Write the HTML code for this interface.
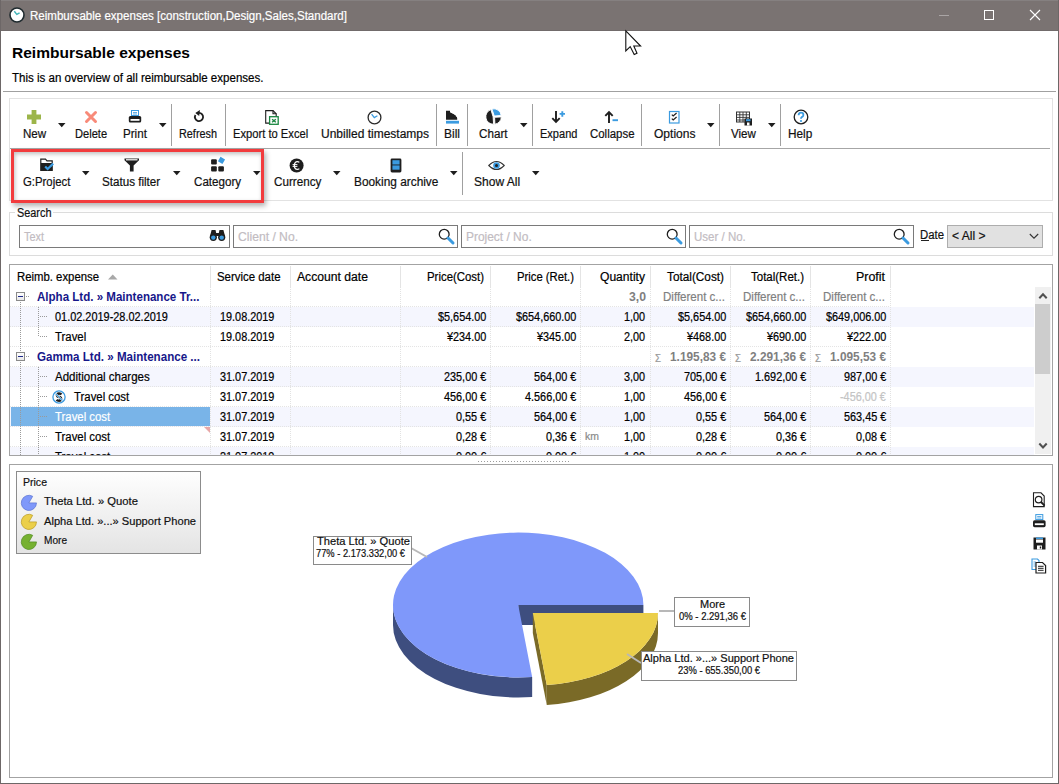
<!DOCTYPE html>
<html><head><meta charset="utf-8"><style>
html,body{margin:0;padding:0;width:1059px;height:784px;overflow:hidden;background:#fff;font-family:"Liberation Sans", sans-serif;}
div{box-sizing:border-box;}
svg{position:absolute;overflow:visible;}
</style></head><body>
<div style="position:absolute;left:0px;top:0px;width:1059px;height:31px;background:#7a7372"></div>
<div style="position:absolute;left:0px;top:0px;width:1059px;height:1px;background:#858080"></div>
<div style="position:absolute;left:1px;top:30px;width:1057px;height:1px;background:#716b6b"></div>
<div style="position:absolute;left:0px;top:0px;width:1px;height:784px;background:#6d6767"></div>
<div style="position:absolute;left:1058px;top:0px;width:1px;height:784px;background:#6d6767"></div>
<div style="position:absolute;left:0px;top:783px;width:1059px;height:1px;background:#6d6767"></div>
<svg style="left:9px;top:7px" width="16" height="16" viewBox="0 0 16 16"><circle cx="8" cy="8" r="7" fill="#fff" stroke="#1f2a2e" stroke-width="1.6"/><path d="M5.3 4.3 L7.8 7.4 L10.6 5.8" fill="none" stroke="#3fb3b8" stroke-width="1.4"/></svg>
<div style="position:absolute;left:939px;top:15px;width:10px;height:1px;background:#aaa5a5"></div>
<div style="position:absolute;left:984px;top:10px;width:10px;height:10px;border:1px solid #fff"></div>
<svg style="left:1029px;top:9px" width="12" height="12" viewBox="0 0 12 12"><path d="M1 1 L11 11 M11 1 L1 11" stroke="#fff" stroke-width="1.1"/></svg>
<div style="position:absolute;left:3px;top:91px;width:1053px;height:1px;background:#a0a0a0"></div>
<div style="position:absolute;left:9px;top:98px;width:1044px;height:103px;border:1px solid #e2e2e2"></div>
<div style="position:absolute;left:10px;top:148px;width:1040px;height:1px;background:#a6a6a6"></div>
<div style="position:absolute;left:171px;top:104px;width:1px;height:42px;background:#a0a0a0"></div>
<div style="position:absolute;left:225px;top:104px;width:1px;height:42px;background:#a0a0a0"></div>
<div style="position:absolute;left:436px;top:104px;width:1px;height:42px;background:#a0a0a0"></div>
<div style="position:absolute;left:467px;top:104px;width:1px;height:42px;background:#a0a0a0"></div>
<div style="position:absolute;left:532px;top:104px;width:1px;height:42px;background:#a0a0a0"></div>
<div style="position:absolute;left:641px;top:104px;width:1px;height:42px;background:#a0a0a0"></div>
<div style="position:absolute;left:719px;top:104px;width:1px;height:42px;background:#a0a0a0"></div>
<div style="position:absolute;left:780px;top:104px;width:1px;height:42px;background:#a0a0a0"></div>
<div style="position:absolute;left:462px;top:152px;width:1px;height:43px;background:#a0a0a0"></div>
<svg style="left:58px;top:123px" width="8" height="5" viewBox="0 0 8 5"><path d="M0 0 H7.5 L3.75 4.2 Z" fill="#1e1e1e"/></svg>
<svg style="left:159px;top:123px" width="8" height="5" viewBox="0 0 8 5"><path d="M0 0 H7.5 L3.75 4.2 Z" fill="#1e1e1e"/></svg>
<svg style="left:520px;top:123px" width="8" height="5" viewBox="0 0 8 5"><path d="M0 0 H7.5 L3.75 4.2 Z" fill="#1e1e1e"/></svg>
<svg style="left:707px;top:123px" width="8" height="5" viewBox="0 0 8 5"><path d="M0 0 H7.5 L3.75 4.2 Z" fill="#1e1e1e"/></svg>
<svg style="left:768px;top:123px" width="8" height="5" viewBox="0 0 8 5"><path d="M0 0 H7.5 L3.75 4.2 Z" fill="#1e1e1e"/></svg>
<svg style="left:82px;top:171px" width="8" height="5" viewBox="0 0 8 5"><path d="M0 0 H7.5 L3.75 4.2 Z" fill="#1e1e1e"/></svg>
<svg style="left:173px;top:171px" width="8" height="5" viewBox="0 0 8 5"><path d="M0 0 H7.5 L3.75 4.2 Z" fill="#1e1e1e"/></svg>
<svg style="left:253px;top:171px" width="8" height="5" viewBox="0 0 8 5"><path d="M0 0 H7.5 L3.75 4.2 Z" fill="#1e1e1e"/></svg>
<svg style="left:333px;top:171px" width="8" height="5" viewBox="0 0 8 5"><path d="M0 0 H7.5 L3.75 4.2 Z" fill="#1e1e1e"/></svg>
<svg style="left:450px;top:171px" width="8" height="5" viewBox="0 0 8 5"><path d="M0 0 H7.5 L3.75 4.2 Z" fill="#1e1e1e"/></svg>
<svg style="left:532px;top:171px" width="8" height="5" viewBox="0 0 8 5"><path d="M0 0 H7.5 L3.75 4.2 Z" fill="#1e1e1e"/></svg>
<svg style="left:27px;top:110px" width="14" height="14" viewBox="0 0 14 14"><path d="M4.6 0 H9.4 V4.6 H14 V9.4 H9.4 V14 H4.6 V9.4 H0 V4.6 H4.6 Z" fill="#9cb54a"/></svg>
<svg style="left:85px;top:111px" width="12" height="12" viewBox="0 0 12 12"><path d="M1.5 1.5 L10.5 10.5 M10.5 1.5 L1.5 10.5" stroke="#f88a79" stroke-width="3" stroke-linecap="round"/></svg>
<svg style="left:128px;top:110px" width="14" height="14" viewBox="0 0 14 14"><rect x="3.5" y="0.5" width="7" height="5" fill="#fff" stroke="#3b9be0" stroke-width="1"/><path d="M5 2.5 H9 M5 4 H9" stroke="#3b9be0" stroke-width="0.8"/><rect x="0.8" y="6" width="12.4" height="6.5" rx="1.5" fill="#1e1e1e"/><rect x="2.5" y="9" width="9" height="1.8" fill="#fff"/></svg>
<svg style="left:193px;top:109px" width="13" height="14" viewBox="0 0 13 14"><path d="M6 3.9 A4.1 4.1 0 1 1 2.45 5.95" fill="none" stroke="#1e1e1e" stroke-width="1.8"/><path d="M2.3 4 L6.9 1 L6.2 6.9 Z" fill="#1e1e1e"/></svg>
<svg style="left:264px;top:109px" width="16" height="17" viewBox="0 0 16 17"><path d="M1.7 1.6 H9 L12.2 4.8 V14.1 H1.7 Z" fill="#fff" stroke="#1e1e1e" stroke-width="1.1"/><path d="M9 1.6 V4.8 H12.2" fill="none" stroke="#1e1e1e" stroke-width="1.1"/><rect x="5.6" y="7.7" width="8.6" height="7.6" fill="#fff" stroke="#1a8641" stroke-width="1.3"/><path d="M8.1 10.2 L11.8 13.3 M11.8 10.2 L8.1 13.3" stroke="#1a8641" stroke-width="1.4"/></svg>
<svg style="left:367px;top:110px" width="15" height="15" viewBox="0 0 15 15"><circle cx="7.5" cy="7.5" r="6.4" fill="#fff" stroke="#2a2a2a" stroke-width="1.3"/><path d="M4.6 4.2 L7.3 7.6 L10.4 5.8" fill="none" stroke="#3b9be0" stroke-width="1.3"/></svg>
<svg style="left:445px;top:110px" width="15" height="15" viewBox="0 0 15 15"><path d="M1 0.8 H5 V2.3 Q6 2.8 7 3.2 L9 4.2 L10.6 5.4 L11.8 6.8 L12.2 8.6 V9.8 H1 Z" fill="#1e1e1e"/><circle cx="6.3" cy="2.4" r="0.5" fill="#fff"/><circle cx="8.2" cy="3.4" r="0.5" fill="#fff"/><circle cx="10" cy="4.6" r="0.5" fill="#fff"/><circle cx="11.4" cy="6.2" r="0.5" fill="#fff"/><rect x="1" y="10.8" width="13" height="2.8" fill="#3b9be0"/></svg>
<svg style="left:485px;top:108px" width="18" height="18" viewBox="0 0 18 18"><path d="M8.1 8.8 L5.9 1.6 A7.5 7.5 0 0 0 8.6 16.2 Z" fill="#1e1e1e" stroke="#fff" stroke-width="0.9"/><path d="M9.3 8 L6.9 1 A7.5 7.5 0 0 1 16.2 7.4 Z" fill="#3b9be0" stroke="#fff" stroke-width="0.9"/><path d="M9.6 9.3 L16.3 8.9 A7.5 7.5 0 0 1 9.9 16.2 Z" fill="#1e1e1e" stroke="#fff" stroke-width="0.9"/></svg>
<svg style="left:551px;top:110px" width="15" height="14" viewBox="0 0 15 14"><path d="M5 1 V12 M1.3 8.2 L5 12 L8.7 8.2" fill="none" stroke="#1e1e1e" stroke-width="1.9"/><path d="M11.3 1.2 V6.7 M8.6 3.9 H14" stroke="#3b9be0" stroke-width="1.9"/></svg>
<svg style="left:604px;top:110px" width="15" height="14" viewBox="0 0 15 14"><path d="M5 13 V2 M1.3 5.8 L5 2 L8.7 5.8" fill="none" stroke="#1e1e1e" stroke-width="1.9"/><path d="M8.5 10.2 H14" stroke="#3b9be0" stroke-width="1.9"/></svg>
<svg style="left:668px;top:110px" width="12" height="14" viewBox="0 0 12 14"><rect x="1.5" y="1.5" width="9.5" height="11.5" fill="#fff" stroke="#3b9be0" stroke-width="1.2"/><path d="M3.8 4.6 L5.2 6 L8.6 3 M3.8 8.6 L5.2 10 L8.6 7" fill="none" stroke="#1e1e1e" stroke-width="1.2"/></svg>
<svg style="left:736px;top:111px" width="17" height="15" viewBox="0 0 17 15"><rect x="0.5" y="1" width="13" height="10" fill="#fff" stroke="#333" stroke-width="1"/><path d="M0.5 3.8 H13.5 M0.5 6.4 H13.5 M0.5 9 H13.5 M3.8 1 V11 M7 1 V11 M10.3 1 V11" stroke="#333" stroke-width="0.9"/><rect x="8.5" y="7.5" width="7.5" height="7" fill="#1e1e1e"/><rect x="10" y="8.2" width="4.5" height="2" fill="#3b9be0"/><rect x="11" y="11.5" width="2.5" height="3" fill="#fff"/></svg>
<svg style="left:793px;top:109px" width="16" height="16" viewBox="0 0 16 16"><circle cx="8" cy="8" r="6.8" fill="#fff" stroke="#1e1e1e" stroke-width="1.3"/><path d="M5.6 6.2 Q5.6 3.6 8 3.6 Q10.4 3.6 10.4 5.9 Q10.4 7.4 8.8 8.1 Q8 8.5 8 9.8" fill="none" stroke="#3b9be0" stroke-width="1.8"/><circle cx="8" cy="12" r="1.1" fill="#3b9be0"/></svg>
<svg style="left:40px;top:158px" width="16" height="15" viewBox="0 0 16 15"><path d="M0.8 1.2 H5.5 L7 2.8 H12.2 V12.5 H0.8 Z" fill="#fff" stroke="#1e1e1e" stroke-width="1.2"/><rect x="0.8" y="5" width="11.4" height="7.5" fill="#1e1e1e"/><path d="M5.2 8.4 L7.6 11 L13.2 5.6" fill="none" stroke="#3b9be0" stroke-width="2.2"/></svg>
<svg style="left:124px;top:158px" width="16" height="14" viewBox="0 0 16 14"><path d="M0.5 0.5 H15 V2.2 L9.6 7.5 V13.5 H5.9 V7.5 L0.5 2.2 Z" fill="#1e1e1e"/><rect x="2" y="1.2" width="11.5" height="1.2" fill="#fff"/></svg>
<svg style="left:210px;top:157px" width="16" height="16" viewBox="0 0 16 16"><rect x="1.1" y="2.2" width="5.7" height="5.4" rx="1" fill="#1e1e1e"/><rect x="1.1" y="9.2" width="5.7" height="5.4" rx="1" fill="#1e1e1e"/><rect x="8.3" y="9.2" width="5.6" height="5.4" rx="1" fill="#1e1e1e"/><rect x="8.9" y="0.8" width="5.2" height="5.2" transform="rotate(30 11.5 3.4)" fill="#3b9be0"/></svg>
<svg style="left:289px;top:158px" width="16" height="15" viewBox="0 0 16 15"><circle cx="7.6" cy="7.5" r="7" fill="#1e1e1e"/><path d="M10.3 4.4 Q9.5 3.6 8.3 3.6 Q5.6 3.6 5.3 7.5 Q5.6 11.4 8.3 11.4 Q9.5 11.4 10.3 10.6" fill="none" stroke="#fff" stroke-width="1.3"/><path d="M3.6 6.6 H8.4 M3.6 8.4 H8.4" stroke="#fff" stroke-width="1"/></svg>
<svg style="left:390px;top:158px" width="12" height="15" viewBox="0 0 12 15"><rect x="0.6" y="0.6" width="10.8" height="13.8" rx="1.4" fill="#1e1e1e"/><rect x="2.4" y="2.2" width="7.2" height="4.3" fill="#3b9be0"/><rect x="2.4" y="7.4" width="7.2" height="4.3" fill="#3b9be0"/></svg>
<svg style="left:488px;top:160px" width="17" height="11" viewBox="0 0 17 11"><path d="M0.8 5.5 Q8.5 -2.5 16.2 5.5 Q8.5 13.5 0.8 5.5 Z" fill="#fff" stroke="#333" stroke-width="1.1"/><circle cx="8.5" cy="5.5" r="3.3" fill="#3b9be0"/><circle cx="8.5" cy="5.5" r="1.5" fill="#1e1e1e"/></svg>
<div style="position:absolute;left:9px;top:212px;width:1044px;height:44px;border:1px solid #dcdcdc"></div>
<div style="position:absolute;left:15px;top:205px;width:38px;height:12px;background:#fff"></div>
<div style="position:absolute;left:19px;top:225px;width:211px;height:23px;border:1px solid #7a7a7a"></div>
<div style="position:absolute;left:233px;top:225px;width:225px;height:23px;border:1px solid #7a7a7a"></div>
<div style="position:absolute;left:461px;top:225px;width:225px;height:23px;border:1px solid #7a7a7a"></div>
<div style="position:absolute;left:689px;top:225px;width:225px;height:23px;border:1px solid #7a7a7a"></div>
<svg style="left:209px;top:229px" width="17" height="13" viewBox="0 0 17 13"><path d="M2.6 1 H6.5 L7.2 4 H9.8 L10.5 1 H14.4 L16 7 H1 Z" fill="#1e1e1e"/><circle cx="4.3" cy="8.3" r="3.6" fill="#1e1e1e"/><circle cx="12.7" cy="8.3" r="3.6" fill="#1e1e1e"/><circle cx="4.3" cy="8.6" r="2.2" fill="#3b9be0"/><circle cx="12.7" cy="8.6" r="2.2" fill="#3b9be0"/></svg>
<svg style="left:438px;top:228px" width="17" height="17" viewBox="0 0 17 17"><circle cx="6.2" cy="6.2" r="4.9" fill="#fff" stroke="#1e1e1e" stroke-width="1.3"/><path d="M10 10 L15 15" stroke="#3b9be0" stroke-width="3" stroke-linecap="round"/></svg>
<svg style="left:666px;top:228px" width="17" height="17" viewBox="0 0 17 17"><circle cx="6.2" cy="6.2" r="4.9" fill="#fff" stroke="#1e1e1e" stroke-width="1.3"/><path d="M10 10 L15 15" stroke="#3b9be0" stroke-width="3" stroke-linecap="round"/></svg>
<svg style="left:893px;top:228px" width="17" height="17" viewBox="0 0 17 17"><circle cx="6.2" cy="6.2" r="4.9" fill="#fff" stroke="#1e1e1e" stroke-width="1.3"/><path d="M10 10 L15 15" stroke="#3b9be0" stroke-width="3" stroke-linecap="round"/></svg>
<div style="position:absolute;left:920.5px;top:240px;width:8px;height:1px;background:#222"></div>
<div style="position:absolute;left:947px;top:225px;width:96px;height:23px;background:#e1e1e1;border:1px solid #adadad"></div>
<svg style="left:1029px;top:233px" width="10" height="7" viewBox="0 0 10 7"><path d="M0.8 1 L5 5.2 L9.2 1" fill="none" stroke="#333" stroke-width="1.1"/></svg>
<div style="position:absolute;left:10px;top:307px;width:1024px;height:20px;background:#f5f6fe"></div>
<div style="position:absolute;left:10px;top:367px;width:1024px;height:20px;background:#f5f6fe"></div>
<div style="position:absolute;left:10px;top:407px;width:1024px;height:20px;background:#f5f6fe"></div>
<div style="position:absolute;left:10px;top:447px;width:1024px;height:8px;background:#f5f6fe"></div>
<div style="position:absolute;left:11px;top:407px;width:199px;height:19px;background:#79b4e8"></div>
<div style="position:absolute;left:210px;top:266px;width:1px;height:21px;background:#e4e4e4"></div>
<div style="position:absolute;left:290px;top:266px;width:1px;height:21px;background:#e4e4e4"></div>
<div style="position:absolute;left:400px;top:266px;width:1px;height:21px;background:#e4e4e4"></div>
<div style="position:absolute;left:490px;top:266px;width:1px;height:21px;background:#e4e4e4"></div>
<div style="position:absolute;left:580px;top:266px;width:1px;height:21px;background:#e4e4e4"></div>
<div style="position:absolute;left:650px;top:266px;width:1px;height:21px;background:#e4e4e4"></div>
<div style="position:absolute;left:730px;top:266px;width:1px;height:21px;background:#e4e4e4"></div>
<div style="position:absolute;left:810px;top:266px;width:1px;height:21px;background:#e4e4e4"></div>
<div style="position:absolute;left:890px;top:266px;width:1px;height:21px;background:#e4e4e4"></div>
<div style="position:absolute;left:210px;top:287px;width:1px;height:168px;background-image:linear-gradient(#e2e2e2 50%,transparent 50%);background-size:1px 2px"></div>
<div style="position:absolute;left:290px;top:287px;width:1px;height:168px;background-image:linear-gradient(#e2e2e2 50%,transparent 50%);background-size:1px 2px"></div>
<div style="position:absolute;left:400px;top:287px;width:1px;height:168px;background-image:linear-gradient(#e2e2e2 50%,transparent 50%);background-size:1px 2px"></div>
<div style="position:absolute;left:490px;top:287px;width:1px;height:168px;background-image:linear-gradient(#e2e2e2 50%,transparent 50%);background-size:1px 2px"></div>
<div style="position:absolute;left:580px;top:287px;width:1px;height:168px;background-image:linear-gradient(#e2e2e2 50%,transparent 50%);background-size:1px 2px"></div>
<div style="position:absolute;left:650px;top:287px;width:1px;height:168px;background-image:linear-gradient(#e2e2e2 50%,transparent 50%);background-size:1px 2px"></div>
<div style="position:absolute;left:730px;top:287px;width:1px;height:168px;background-image:linear-gradient(#e2e2e2 50%,transparent 50%);background-size:1px 2px"></div>
<div style="position:absolute;left:810px;top:287px;width:1px;height:168px;background-image:linear-gradient(#e2e2e2 50%,transparent 50%);background-size:1px 2px"></div>
<div style="position:absolute;left:890px;top:287px;width:1px;height:168px;background-image:linear-gradient(#e2e2e2 50%,transparent 50%);background-size:1px 2px"></div>
<div style="position:absolute;left:10px;top:306px;width:880px;height:1px;background-image:linear-gradient(90deg,#e4e4e4 50%,transparent 50%);background-size:2px 1px"></div>
<div style="position:absolute;left:10px;top:326px;width:880px;height:1px;background-image:linear-gradient(90deg,#e4e4e4 50%,transparent 50%);background-size:2px 1px"></div>
<div style="position:absolute;left:10px;top:346px;width:880px;height:1px;background-image:linear-gradient(90deg,#e4e4e4 50%,transparent 50%);background-size:2px 1px"></div>
<div style="position:absolute;left:10px;top:366px;width:880px;height:1px;background-image:linear-gradient(90deg,#e4e4e4 50%,transparent 50%);background-size:2px 1px"></div>
<div style="position:absolute;left:10px;top:386px;width:880px;height:1px;background-image:linear-gradient(90deg,#e4e4e4 50%,transparent 50%);background-size:2px 1px"></div>
<div style="position:absolute;left:10px;top:406px;width:880px;height:1px;background-image:linear-gradient(90deg,#e4e4e4 50%,transparent 50%);background-size:2px 1px"></div>
<div style="position:absolute;left:10px;top:426px;width:880px;height:1px;background-image:linear-gradient(90deg,#e4e4e4 50%,transparent 50%);background-size:2px 1px"></div>
<div style="position:absolute;left:10px;top:446px;width:880px;height:1px;background-image:linear-gradient(90deg,#e4e4e4 50%,transparent 50%);background-size:2px 1px"></div>
<svg style="left:108px;top:274px" width="10" height="6" viewBox="0 0 10 6"><path d="M0 5.6 L4.75 0.6 L9.5 5.6 Z" fill="#a8a8a8"/></svg>
<div style="position:absolute;left:20px;top:302px;width:1px;height:153px;background-image:linear-gradient(#9a9a9a 50%,transparent 50%);background-size:1px 2px"></div>
<div style="position:absolute;left:38px;top:307px;width:1px;height:30px;background-image:linear-gradient(#9a9a9a 50%,transparent 50%);background-size:1px 2px"></div>
<div style="position:absolute;left:38px;top:367px;width:1px;height:88px;background-image:linear-gradient(#9a9a9a 50%,transparent 50%);background-size:1px 2px"></div>
<div style="position:absolute;left:16px;top:292px;width:9px;height:9px;border:1px solid #8a8a8a;background:linear-gradient(#fff,#e8e8e8)"></div>
<div style="position:absolute;left:18px;top:296px;width:5px;height:1px;background:#1f2a8a"></div>
<div style="position:absolute;left:26px;top:296px;width:4px;height:1px;background-image:linear-gradient(90deg,#9a9a9a 50%,transparent 50%);background-size:2px 1px"></div>
<div style="position:absolute;left:16px;top:352px;width:9px;height:9px;border:1px solid #8a8a8a;background:linear-gradient(#fff,#e8e8e8)"></div>
<div style="position:absolute;left:18px;top:356px;width:5px;height:1px;background:#1f2a8a"></div>
<div style="position:absolute;left:26px;top:356px;width:4px;height:1px;background-image:linear-gradient(90deg,#9a9a9a 50%,transparent 50%);background-size:2px 1px"></div>
<div style="position:absolute;left:40px;top:316px;width:8px;height:1px;background-image:linear-gradient(90deg,#9a9a9a 50%,transparent 50%);background-size:2px 1px"></div>
<div style="position:absolute;left:40px;top:336px;width:8px;height:1px;background-image:linear-gradient(90deg,#9a9a9a 50%,transparent 50%);background-size:2px 1px"></div>
<div style="position:absolute;left:40px;top:376px;width:8px;height:1px;background-image:linear-gradient(90deg,#9a9a9a 50%,transparent 50%);background-size:2px 1px"></div>
<div style="position:absolute;left:40px;top:396px;width:8px;height:1px;background-image:linear-gradient(90deg,#9a9a9a 50%,transparent 50%);background-size:2px 1px"></div>
<div style="position:absolute;left:40px;top:416px;width:8px;height:1px;background-image:linear-gradient(90deg,#9a9a9a 50%,transparent 50%);background-size:2px 1px"></div>
<div style="position:absolute;left:40px;top:436px;width:8px;height:1px;background-image:linear-gradient(90deg,#9a9a9a 50%,transparent 50%);background-size:2px 1px"></div>
<div style="position:absolute;left:40px;top:456px;width:8px;height:1px;background-image:linear-gradient(90deg,#9a9a9a 50%,transparent 50%);background-size:2px 1px"></div>
<svg style="left:52px;top:390px" width="15" height="15" viewBox="0 0 15 15"><circle cx="7" cy="7" r="6.1" fill="#fff" stroke="#3a9ae0" stroke-width="1.3"/><path d="M9.4 4.4 Q8.6 3.3 7 3.4 Q4.8 3.6 5 5.5 Q5.3 6.8 7 7 Q9.1 7.3 9.1 8.9 Q9 10.7 7 10.7 Q5.4 10.7 4.6 9.7" fill="none" stroke="#1e1e1e" stroke-width="2.5"/><path d="M3.6 3.6 L10.4 10.4" stroke="#fff" stroke-width="1.6"/><path d="M3.6 3.6 L10.4 10.4" stroke="#3a9ae0" stroke-width="1.1"/></svg>
<svg style="left:204px;top:427px" width="6" height="6" viewBox="0 0 6 6"><path d="M0 0 H6 V6 Z" fill="#e8a7a7"/></svg>
<div style="position:absolute;left:1035px;top:287px;width:16px;height:167px;background:#f0f0f0"></div>
<div style="position:absolute;left:1035px;top:304px;width:15px;height:70px;background:#cdcdcd"></div>
<svg style="left:1038px;top:292px" width="10" height="8" viewBox="0 0 10 8"><path d="M1.3 6.3 L5 2.3 L8.7 6.3" fill="none" stroke="#505050" stroke-width="2"/></svg>
<svg style="left:1038px;top:442px" width="10" height="8" viewBox="0 0 10 8"><path d="M1.3 1.5 L5 5.5 L8.7 1.5" fill="none" stroke="#505050" stroke-width="2"/></svg>
<div style="position:absolute;left:9px;top:464px;width:1044px;height:314px;border:1px solid #a3a3a3"></div>
<div style="position:absolute;left:16px;top:471px;width:185px;height:83px;border:1px solid #8c8c8c;background:linear-gradient(#fefefe,#e4e4e4)"></div>
<svg style="left:20px;top:494.0px" width="18" height="18" viewBox="0 0 18 18"><path d="M8.9 8.9 L12.7 2.32 A7.6 7.6 0 1 0 16.5 8.9 Z" fill="#7f98fa" stroke="#5a72d0" stroke-width="0.7"/></svg>
<svg style="left:20px;top:513.3px" width="18" height="18" viewBox="0 0 18 18"><path d="M8.9 8.9 L12.7 2.32 A7.6 7.6 0 1 0 16.5 8.9 Z" fill="#ebcf4a" stroke="#b89a20" stroke-width="0.7"/></svg>
<svg style="left:20px;top:532.6px" width="18" height="18" viewBox="0 0 18 18"><path d="M8.9 8.9 L12.7 2.32 A7.6 7.6 0 1 0 16.5 8.9 Z" fill="#76b130" stroke="#4f8a1f" stroke-width="0.7"/></svg>
<svg style="left:0;top:0" width="1059" height="784" viewBox="0 0 1059 784"><path d="M532.16 676.95 A125.2 72.4 0 0 1 393.00 605.00 L393.00 625.00 A125.2 72.4 0 0 0 532.16 696.95 Z" fill="#3e4e7f"/><path d="M518.2 605 L643.40 605.00 L643.40 625.00 L518.2 625 Z" fill="#3e4e7f"/><path d="M518.2 605 L532.16 676.95 A125.2 72.4 0 1 1 643.40 605.00 Z" fill="#7f98fa"/><path d="M658.00 613.00 A125.2 72.4 0 0 1 546.76 684.95 L546.76 704.95 A125.2 72.4 0 0 0 658.00 633.00 Z" fill="#7a6a27"/><path d="M532.8000000000001 613 L546.76 684.95 L546.76 704.95 L532.8000000000001 633 Z" fill="#7a6a27"/><path d="M532.8000000000001 613 L658.00 613.00 A125.2 72.4 0 0 1 546.76 684.95 Z" fill="#ebcf4a"/><path d="M411 548 L427 557" stroke="#b8b8b8" stroke-width="2"/><path d="M659 611 H674" stroke="#b8b8b8" stroke-width="2"/><path d="M627 654 L641 663" stroke="#b8b8b8" stroke-width="2"/></svg>
<div style="position:absolute;left:313px;top:536px;width:99px;height:29px;border:1px solid #8a8a8a;background:#fff"></div>
<div style="position:absolute;left:674px;top:597px;width:76px;height:30px;border:1px solid #8a8a8a;background:#fff"></div>
<div style="position:absolute;left:641px;top:651px;width:156px;height:30px;border:1px solid #8a8a8a;background:#fff"></div>
<svg style="left:1032px;top:492px" width="15" height="16" viewBox="0 0 15 16"><path d="M1.5 0.8 H9 L12.2 4 V14.6 H1.5 Z" fill="#fff" stroke="#1e1e1e" stroke-width="1.1"/><circle cx="6.6" cy="7.6" r="3.3" fill="#fff" stroke="#1e1e1e" stroke-width="1.2"/><path d="M9 10 L12.6 13.6" stroke="#1e1e1e" stroke-width="1.8"/></svg>
<svg style="left:1032px;top:514px" width="15" height="15" viewBox="0 0 15 15"><rect x="3.8" y="0.6" width="7" height="5" fill="#fff" stroke="#3b9be0" stroke-width="1"/><path d="M5.2 2.5 H9.4 M5.2 4 H9.4" stroke="#3b9be0" stroke-width="0.8"/><rect x="1" y="6.2" width="12.6" height="7" rx="1.6" fill="#1e1e1e"/><rect x="2.8" y="9.3" width="9" height="1.8" fill="#fff"/></svg>
<svg style="left:1033px;top:537px" width="13" height="13" viewBox="0 0 13 13"><path d="M0.5 0.5 H12.5 V12.5 H0.5 Z" fill="#1e1e1e"/><rect x="3" y="0.5" width="7" height="1.5" fill="#3b9be0"/><rect x="3" y="2.5" width="7" height="3.2" fill="#fff"/><rect x="4" y="8.5" width="5" height="4" fill="#fff"/><rect x="6.8" y="9.5" width="1.4" height="2" fill="#1e1e1e"/></svg>
<svg style="left:1031px;top:558px" width="16" height="16" viewBox="0 0 16 16"><path d="M1 1 H6.5 L8 2.5 V11.5 H1 Z" fill="#fff" stroke="#3b9be0" stroke-width="1.1"/><path d="M2.5 4 H5 M2.5 6 H5 M2.5 8 H5" stroke="#3b9be0" stroke-width="0.8"/><path d="M5 4.5 H11.5 L14.6 7.6 V15 H5 Z" fill="#fff" stroke="#1e1e1e" stroke-width="1.2"/><path d="M7 8.3 H12.6 M7 10.3 H12.6 M7 12.3 H12.6" stroke="#1e1e1e" stroke-width="1"/></svg>
<div style="position:absolute;left:30.00px;top:10.14px;font-size:12px;line-height:12px;font-weight:400;color:#fff;white-space:pre;-webkit-text-stroke:0.2px currentColor;transform-origin:0 0;transform:scaleX(0.9620);">Reimbursable expenses [construction,Design,Sales,Standard]</div>
<div style="position:absolute;left:12.00px;top:45.30px;font-size:15px;line-height:15px;font-weight:700;color:#000;white-space:pre;transform-origin:0 0;transform:scaleX(1.0364);">Reimbursable expenses</div>
<div style="position:absolute;left:12.00px;top:71.84px;font-size:12px;line-height:12px;font-weight:400;color:#000;white-space:pre;-webkit-text-stroke:0.2px currentColor;transform-origin:0 0;transform:scaleX(0.9619);">This is an overview of all reimbursable expenses.</div>
<div style="position:absolute;left:22.70px;top:127.64px;font-size:12px;line-height:12px;font-weight:400;color:#111;white-space:pre;-webkit-text-stroke:0.2px currentColor;transform-origin:0 0;transform:scaleX(0.9660);">New</div>
<div style="position:absolute;left:74.70px;top:127.64px;font-size:12px;line-height:12px;font-weight:400;color:#111;white-space:pre;-webkit-text-stroke:0.2px currentColor;transform-origin:0 0;transform:scaleX(0.9254);">Delete</div>
<div style="position:absolute;left:122.90px;top:127.64px;font-size:12px;line-height:12px;font-weight:400;color:#111;white-space:pre;-webkit-text-stroke:0.2px currentColor;transform-origin:0 0;transform:scaleX(0.9681);">Print</div>
<div style="position:absolute;left:179.40px;top:127.64px;font-size:12px;line-height:12px;font-weight:400;color:#111;white-space:pre;-webkit-text-stroke:0.2px currentColor;transform-origin:0 0;transform:scaleX(0.9041);">Refresh</div>
<div style="position:absolute;left:233.30px;top:127.64px;font-size:12px;line-height:12px;font-weight:400;color:#111;white-space:pre;-webkit-text-stroke:0.2px currentColor;transform-origin:0 0;transform:scaleX(0.9318);">Export to Excel</div>
<div style="position:absolute;left:320.60px;top:127.64px;font-size:12px;line-height:12px;font-weight:400;color:#111;white-space:pre;-webkit-text-stroke:0.2px currentColor;transform-origin:0 0;transform:scaleX(0.9996);">Unbilled timestamps</div>
<div style="position:absolute;left:444.10px;top:127.64px;font-size:12px;line-height:12px;font-weight:400;color:#111;white-space:pre;-webkit-text-stroke:0.2px currentColor;transform-origin:0 0;transform:scaleX(0.9990);">Bill</div>
<div style="position:absolute;left:479.40px;top:127.64px;font-size:12px;line-height:12px;font-weight:400;color:#111;white-space:pre;-webkit-text-stroke:0.2px currentColor;transform-origin:0 0;transform:scaleX(0.9712);">Chart</div>
<div style="position:absolute;left:540.10px;top:127.64px;font-size:12px;line-height:12px;font-weight:400;color:#111;white-space:pre;-webkit-text-stroke:0.2px currentColor;transform-origin:0 0;transform:scaleX(0.9188);">Expand</div>
<div style="position:absolute;left:589.50px;top:127.64px;font-size:12px;line-height:12px;font-weight:400;color:#111;white-space:pre;-webkit-text-stroke:0.2px currentColor;transform-origin:0 0;transform:scaleX(0.9528);">Collapse</div>
<div style="position:absolute;left:653.50px;top:127.64px;font-size:12px;line-height:12px;font-weight:400;color:#111;white-space:pre;-webkit-text-stroke:0.2px currentColor;transform-origin:0 0;transform:scaleX(1.0034);">Options</div>
<div style="position:absolute;left:731.00px;top:127.64px;font-size:12px;line-height:12px;font-weight:400;color:#111;white-space:pre;-webkit-text-stroke:0.2px currentColor;transform-origin:0 0;transform:scaleX(0.9652);">View</div>
<div style="position:absolute;left:788.10px;top:127.64px;font-size:12px;line-height:12px;font-weight:400;color:#111;white-space:pre;-webkit-text-stroke:0.2px currentColor;transform-origin:0 0;transform:scaleX(0.9843);">Help</div>
<div style="position:absolute;left:22.50px;top:175.54px;font-size:12px;line-height:12px;font-weight:400;color:#111;white-space:pre;-webkit-text-stroke:0.2px currentColor;transform-origin:0 0;transform:scaleX(0.9457);">G:Project</div>
<div style="position:absolute;left:102.40px;top:175.54px;font-size:12px;line-height:12px;font-weight:400;color:#111;white-space:pre;-webkit-text-stroke:0.2px currentColor;transform-origin:0 0;transform:scaleX(0.9695);">Status filter</div>
<div style="position:absolute;left:193.80px;top:175.54px;font-size:12px;line-height:12px;font-weight:400;color:#111;white-space:pre;-webkit-text-stroke:0.2px currentColor;transform-origin:0 0;transform:scaleX(0.9671);">Category</div>
<div style="position:absolute;left:273.60px;top:175.54px;font-size:12px;line-height:12px;font-weight:400;color:#111;white-space:pre;-webkit-text-stroke:0.2px currentColor;transform-origin:0 0;transform:scaleX(0.9715);">Currency</div>
<div style="position:absolute;left:353.50px;top:175.54px;font-size:12px;line-height:12px;font-weight:400;color:#111;white-space:pre;-webkit-text-stroke:0.2px currentColor;transform-origin:0 0;transform:scaleX(0.9884);">Booking archive</div>
<div style="position:absolute;left:473.90px;top:175.54px;font-size:12px;line-height:12px;font-weight:400;color:#111;white-space:pre;-webkit-text-stroke:0.2px currentColor;transform-origin:0 0;transform:scaleX(1.0015);">Show All</div>
<div style="position:absolute;left:17.00px;top:206.84px;font-size:12px;line-height:12px;font-weight:400;color:#111;white-space:pre;-webkit-text-stroke:0.2px currentColor;transform-origin:0 0;transform:scaleX(0.9071);">Search</div>
<div style="position:absolute;left:23.50px;top:230.54px;font-size:12px;line-height:12px;font-weight:400;color:#c2bcc2;white-space:pre;-webkit-text-stroke:0.2px currentColor;transform-origin:0 0;transform:scaleX(0.9084);">Text</div>
<div style="position:absolute;left:237.50px;top:230.54px;font-size:12px;line-height:12px;font-weight:400;color:#c2bcc2;white-space:pre;-webkit-text-stroke:0.2px currentColor;transform-origin:0 0;transform:scaleX(1.0108);">Client / No.</div>
<div style="position:absolute;left:465.50px;top:230.54px;font-size:12px;line-height:12px;font-weight:400;color:#c2bcc2;white-space:pre;-webkit-text-stroke:0.2px currentColor;transform-origin:0 0;transform:scaleX(0.9950);">Project / No.</div>
<div style="position:absolute;left:693.50px;top:230.54px;font-size:12px;line-height:12px;font-weight:400;color:#c2bcc2;white-space:pre;-webkit-text-stroke:0.2px currentColor;transform-origin:0 0;transform:scaleX(0.9590);">User / No.</div>
<div style="position:absolute;left:920.20px;top:228.64px;font-size:12px;line-height:12px;font-weight:400;color:#111;white-space:pre;-webkit-text-stroke:0.2px currentColor;transform-origin:0 0;transform:scaleX(0.9464);">Date</div>
<div style="position:absolute;left:951.80px;top:230.34px;font-size:12px;line-height:12px;font-weight:400;color:#111;white-space:pre;-webkit-text-stroke:0.2px currentColor;transform-origin:0 0;transform:scaleX(1.0042);">&lt; All &gt;</div>
<div style="position:absolute;left:17.20px;top:270.64px;font-size:12px;line-height:12px;font-weight:400;color:#000;white-space:pre;-webkit-text-stroke:0.2px currentColor;transform-origin:0 0;transform:scaleX(0.9456);">Reimb. expense</div>
<div style="position:absolute;left:217.20px;top:270.64px;font-size:12px;line-height:12px;font-weight:400;color:#000;white-space:pre;-webkit-text-stroke:0.2px currentColor;transform-origin:0 0;transform:scaleX(0.9520);">Service date</div>
<div style="position:absolute;left:297.30px;top:270.64px;font-size:12px;line-height:12px;font-weight:400;color:#000;white-space:pre;-webkit-text-stroke:0.2px currentColor;transform-origin:0 0;transform:scaleX(1.0134);">Account date</div>
<div style="position:absolute;left:427.20px;top:270.64px;font-size:12px;line-height:12px;font-weight:400;color:#000;white-space:pre;-webkit-text-stroke:0.2px currentColor;transform-origin:0 0;transform:scaleX(0.9498);">Price(Cost)</div>
<div style="position:absolute;left:517.10px;top:270.64px;font-size:12px;line-height:12px;font-weight:400;color:#000;white-space:pre;-webkit-text-stroke:0.2px currentColor;transform-origin:0 0;transform:scaleX(0.9392);">Price (Ret.)</div>
<div style="position:absolute;left:599.60px;top:270.64px;font-size:12px;line-height:12px;font-weight:400;color:#000;white-space:pre;-webkit-text-stroke:0.2px currentColor;transform-origin:0 0;transform:scaleX(1.0066);">Quantity</div>
<div style="position:absolute;left:667.30px;top:270.64px;font-size:12px;line-height:12px;font-weight:400;color:#000;white-space:pre;-webkit-text-stroke:0.2px currentColor;transform-origin:0 0;transform:scaleX(0.9825);">Total(Cost)</div>
<div style="position:absolute;left:751.20px;top:270.64px;font-size:12px;line-height:12px;font-weight:400;color:#000;white-space:pre;-webkit-text-stroke:0.2px currentColor;transform-origin:0 0;transform:scaleX(0.9574);">Total(Ret.)</div>
<div style="position:absolute;left:856.00px;top:270.64px;font-size:12px;line-height:12px;font-weight:400;color:#000;white-space:pre;-webkit-text-stroke:0.2px currentColor;transform-origin:0 0;transform:scaleX(1.0351);">Profit</div>
<div style="position:absolute;left:37.00px;top:290.54px;font-size:12px;line-height:12px;font-weight:700;color:#17178a;white-space:pre;transform-origin:0 0;transform:scaleX(0.9626);">Alpha Ltd. » Maintenance Tr...</div>
<div style="position:absolute;left:629.00px;top:290.54px;font-size:12px;line-height:12px;font-weight:700;color:#7f7f7f;white-space:pre;transform-origin:0 0;transform:scaleX(1.0187);">3,0</div>
<div style="position:absolute;left:663.00px;top:290.54px;font-size:12px;line-height:12px;font-weight:400;color:#7f7f7f;white-space:pre;-webkit-text-stroke:0.2px currentColor;transform-origin:0 0;transform:scaleX(0.9615);">Different c...</div>
<div style="position:absolute;left:743.00px;top:290.54px;font-size:12px;line-height:12px;font-weight:400;color:#7f7f7f;white-space:pre;-webkit-text-stroke:0.2px currentColor;transform-origin:0 0;transform:scaleX(0.9615);">Different c...</div>
<div style="position:absolute;left:823.00px;top:290.54px;font-size:12px;line-height:12px;font-weight:400;color:#7f7f7f;white-space:pre;-webkit-text-stroke:0.2px currentColor;transform-origin:0 0;transform:scaleX(0.9615);">Different c...</div>
<div style="position:absolute;left:37.00px;top:350.54px;font-size:12px;line-height:12px;font-weight:700;color:#17178a;white-space:pre;transform-origin:0 0;transform:scaleX(0.9661);">Gamma Ltd. » Maintenance ...</div>
<div style="position:absolute;left:670.00px;top:350.54px;font-size:12px;line-height:12px;font-weight:700;color:#7f7f7f;white-space:pre;transform-origin:0 0;transform:scaleX(0.9873);">1.195,83 €</div>
<div style="position:absolute;left:655.00px;top:352.89px;font-size:11px;line-height:11px;font-weight:400;color:#9a9a9a;white-space:pre;-webkit-text-stroke:0.2px currentColor;transform-origin:0 0;transform:scaleX(0.8807);">Σ</div>
<div style="position:absolute;left:750.00px;top:350.54px;font-size:12px;line-height:12px;font-weight:700;color:#7f7f7f;white-space:pre;transform-origin:0 0;transform:scaleX(0.9873);">2.291,36 €</div>
<div style="position:absolute;left:735.00px;top:352.89px;font-size:11px;line-height:11px;font-weight:400;color:#9a9a9a;white-space:pre;-webkit-text-stroke:0.2px currentColor;transform-origin:0 0;transform:scaleX(0.8807);">Σ</div>
<div style="position:absolute;left:830.00px;top:350.54px;font-size:12px;line-height:12px;font-weight:700;color:#7f7f7f;white-space:pre;transform-origin:0 0;transform:scaleX(0.9873);">1.095,53 €</div>
<div style="position:absolute;left:815.00px;top:352.89px;font-size:11px;line-height:11px;font-weight:400;color:#9a9a9a;white-space:pre;-webkit-text-stroke:0.2px currentColor;transform-origin:0 0;transform:scaleX(0.8807);">Σ</div>
<div style="position:absolute;left:55.20px;top:310.54px;font-size:12px;line-height:12px;font-weight:400;color:#000;white-space:pre;-webkit-text-stroke:0.2px currentColor;transform-origin:0 0;transform:scaleX(0.9100);">01.02.2019-28.02.2019</div>
<div style="position:absolute;left:219.70px;top:310.54px;font-size:12px;line-height:12px;font-weight:400;color:#000;white-space:pre;-webkit-text-stroke:0.2px currentColor;transform-origin:0 0;transform:scaleX(0.9050);">19.08.2019</div>
<div style="position:absolute;left:437.68px;top:310.54px;font-size:12px;line-height:12px;font-weight:400;color:#000;white-space:pre;-webkit-text-stroke:0.2px currentColor;transform-origin:0 0;transform:scaleX(0.9050);">$5,654.00</div>
<div style="position:absolute;left:515.61px;top:310.54px;font-size:12px;line-height:12px;font-weight:400;color:#000;white-space:pre;-webkit-text-stroke:0.2px currentColor;transform-origin:0 0;transform:scaleX(0.9050);">$654,660.00</div>
<div style="position:absolute;left:624.36px;top:310.54px;font-size:12px;line-height:12px;font-weight:400;color:#000;white-space:pre;-webkit-text-stroke:0.2px currentColor;transform-origin:0 0;transform:scaleX(0.9050);">1,00</div>
<div style="position:absolute;left:677.68px;top:310.54px;font-size:12px;line-height:12px;font-weight:400;color:#000;white-space:pre;-webkit-text-stroke:0.2px currentColor;transform-origin:0 0;transform:scaleX(0.9050);">$5,654.00</div>
<div style="position:absolute;left:745.61px;top:310.54px;font-size:12px;line-height:12px;font-weight:400;color:#000;white-space:pre;-webkit-text-stroke:0.2px currentColor;transform-origin:0 0;transform:scaleX(0.9050);">$654,660.00</div>
<div style="position:absolute;left:825.61px;top:310.54px;font-size:12px;line-height:12px;font-weight:400;color:#000;white-space:pre;-webkit-text-stroke:0.2px currentColor;transform-origin:0 0;transform:scaleX(0.9050);">$649,006.00</div>
<div style="position:absolute;left:55.20px;top:330.54px;font-size:12px;line-height:12px;font-weight:400;color:#000;white-space:pre;-webkit-text-stroke:0.2px currentColor;transform-origin:0 0;transform:scaleX(0.9480);">Travel</div>
<div style="position:absolute;left:219.70px;top:330.54px;font-size:12px;line-height:12px;font-weight:400;color:#000;white-space:pre;-webkit-text-stroke:0.2px currentColor;transform-origin:0 0;transform:scaleX(0.9050);">19.08.2019</div>
<div style="position:absolute;left:446.73px;top:330.54px;font-size:12px;line-height:12px;font-weight:400;color:#000;white-space:pre;-webkit-text-stroke:0.2px currentColor;transform-origin:0 0;transform:scaleX(0.9050);">¥234.00</div>
<div style="position:absolute;left:536.73px;top:330.54px;font-size:12px;line-height:12px;font-weight:400;color:#000;white-space:pre;-webkit-text-stroke:0.2px currentColor;transform-origin:0 0;transform:scaleX(0.9050);">¥345.00</div>
<div style="position:absolute;left:624.36px;top:330.54px;font-size:12px;line-height:12px;font-weight:400;color:#000;white-space:pre;-webkit-text-stroke:0.2px currentColor;transform-origin:0 0;transform:scaleX(0.9050);">2,00</div>
<div style="position:absolute;left:686.73px;top:330.54px;font-size:12px;line-height:12px;font-weight:400;color:#000;white-space:pre;-webkit-text-stroke:0.2px currentColor;transform-origin:0 0;transform:scaleX(0.9050);">¥468.00</div>
<div style="position:absolute;left:766.73px;top:330.54px;font-size:12px;line-height:12px;font-weight:400;color:#000;white-space:pre;-webkit-text-stroke:0.2px currentColor;transform-origin:0 0;transform:scaleX(0.9050);">¥690.00</div>
<div style="position:absolute;left:846.73px;top:330.54px;font-size:12px;line-height:12px;font-weight:400;color:#000;white-space:pre;-webkit-text-stroke:0.2px currentColor;transform-origin:0 0;transform:scaleX(0.9050);">¥222.00</div>
<div style="position:absolute;left:55.20px;top:370.54px;font-size:12px;line-height:12px;font-weight:400;color:#000;white-space:pre;-webkit-text-stroke:0.2px currentColor;transform-origin:0 0;transform:scaleX(0.9600);">Additional charges</div>
<div style="position:absolute;left:219.70px;top:370.54px;font-size:12px;line-height:12px;font-weight:400;color:#000;white-space:pre;-webkit-text-stroke:0.2px currentColor;transform-origin:0 0;transform:scaleX(0.9050);">31.07.2019</div>
<div style="position:absolute;left:443.72px;top:370.54px;font-size:12px;line-height:12px;font-weight:400;color:#000;white-space:pre;-webkit-text-stroke:0.2px currentColor;transform-origin:0 0;transform:scaleX(0.9050);">235,00 €</div>
<div style="position:absolute;left:533.72px;top:370.54px;font-size:12px;line-height:12px;font-weight:400;color:#000;white-space:pre;-webkit-text-stroke:0.2px currentColor;transform-origin:0 0;transform:scaleX(0.9050);">564,00 €</div>
<div style="position:absolute;left:624.36px;top:370.54px;font-size:12px;line-height:12px;font-weight:400;color:#000;white-space:pre;-webkit-text-stroke:0.2px currentColor;transform-origin:0 0;transform:scaleX(0.9050);">3,00</div>
<div style="position:absolute;left:683.72px;top:370.54px;font-size:12px;line-height:12px;font-weight:400;color:#000;white-space:pre;-webkit-text-stroke:0.2px currentColor;transform-origin:0 0;transform:scaleX(0.9050);">705,00 €</div>
<div style="position:absolute;left:754.67px;top:370.54px;font-size:12px;line-height:12px;font-weight:400;color:#000;white-space:pre;-webkit-text-stroke:0.2px currentColor;transform-origin:0 0;transform:scaleX(0.9050);">1.692,00 €</div>
<div style="position:absolute;left:843.72px;top:370.54px;font-size:12px;line-height:12px;font-weight:400;color:#000;white-space:pre;-webkit-text-stroke:0.2px currentColor;transform-origin:0 0;transform:scaleX(0.9050);">987,00 €</div>
<div style="position:absolute;left:73.80px;top:390.54px;font-size:12px;line-height:12px;font-weight:400;color:#000;white-space:pre;-webkit-text-stroke:0.2px currentColor;transform-origin:0 0;transform:scaleX(0.9480);">Travel cost</div>
<div style="position:absolute;left:219.70px;top:390.54px;font-size:12px;line-height:12px;font-weight:400;color:#000;white-space:pre;-webkit-text-stroke:0.2px currentColor;transform-origin:0 0;transform:scaleX(0.9050);">31.07.2019</div>
<div style="position:absolute;left:443.72px;top:390.54px;font-size:12px;line-height:12px;font-weight:400;color:#000;white-space:pre;-webkit-text-stroke:0.2px currentColor;transform-origin:0 0;transform:scaleX(0.9050);">456,00 €</div>
<div style="position:absolute;left:524.67px;top:390.54px;font-size:12px;line-height:12px;font-weight:400;color:#000;white-space:pre;-webkit-text-stroke:0.2px currentColor;transform-origin:0 0;transform:scaleX(0.9050);">4.566,00 €</div>
<div style="position:absolute;left:624.36px;top:390.54px;font-size:12px;line-height:12px;font-weight:400;color:#000;white-space:pre;-webkit-text-stroke:0.2px currentColor;transform-origin:0 0;transform:scaleX(0.9050);">1,00</div>
<div style="position:absolute;left:683.72px;top:390.54px;font-size:12px;line-height:12px;font-weight:400;color:#000;white-space:pre;-webkit-text-stroke:0.2px currentColor;transform-origin:0 0;transform:scaleX(0.9050);">456,00 €</div>
<div style="position:absolute;left:840.10px;top:390.54px;font-size:12px;line-height:12px;font-weight:400;color:#c4c4c4;white-space:pre;-webkit-text-stroke:0.2px currentColor;transform-origin:0 0;transform:scaleX(0.9050);">-456,00 €</div>
<div style="position:absolute;left:55.20px;top:410.54px;font-size:12px;line-height:12px;font-weight:400;color:#fff;white-space:pre;-webkit-text-stroke:0.2px currentColor;transform-origin:0 0;transform:scaleX(0.9480);">Travel cost</div>
<div style="position:absolute;left:219.70px;top:410.54px;font-size:12px;line-height:12px;font-weight:400;color:#000;white-space:pre;-webkit-text-stroke:0.2px currentColor;transform-origin:0 0;transform:scaleX(0.9050);">31.07.2019</div>
<div style="position:absolute;left:455.80px;top:410.54px;font-size:12px;line-height:12px;font-weight:400;color:#000;white-space:pre;-webkit-text-stroke:0.2px currentColor;transform-origin:0 0;transform:scaleX(0.9050);">0,55 €</div>
<div style="position:absolute;left:533.72px;top:410.54px;font-size:12px;line-height:12px;font-weight:400;color:#000;white-space:pre;-webkit-text-stroke:0.2px currentColor;transform-origin:0 0;transform:scaleX(0.9050);">564,00 €</div>
<div style="position:absolute;left:624.36px;top:410.54px;font-size:12px;line-height:12px;font-weight:400;color:#000;white-space:pre;-webkit-text-stroke:0.2px currentColor;transform-origin:0 0;transform:scaleX(0.9050);">1,00</div>
<div style="position:absolute;left:695.80px;top:410.54px;font-size:12px;line-height:12px;font-weight:400;color:#000;white-space:pre;-webkit-text-stroke:0.2px currentColor;transform-origin:0 0;transform:scaleX(0.9050);">0,55 €</div>
<div style="position:absolute;left:763.72px;top:410.54px;font-size:12px;line-height:12px;font-weight:400;color:#000;white-space:pre;-webkit-text-stroke:0.2px currentColor;transform-origin:0 0;transform:scaleX(0.9050);">564,00 €</div>
<div style="position:absolute;left:843.72px;top:410.54px;font-size:12px;line-height:12px;font-weight:400;color:#000;white-space:pre;-webkit-text-stroke:0.2px currentColor;transform-origin:0 0;transform:scaleX(0.9050);">563,45 €</div>
<div style="position:absolute;left:55.20px;top:430.54px;font-size:12px;line-height:12px;font-weight:400;color:#000;white-space:pre;-webkit-text-stroke:0.2px currentColor;transform-origin:0 0;transform:scaleX(0.9480);">Travel cost</div>
<div style="position:absolute;left:219.70px;top:430.54px;font-size:12px;line-height:12px;font-weight:400;color:#000;white-space:pre;-webkit-text-stroke:0.2px currentColor;transform-origin:0 0;transform:scaleX(0.9050);">31.07.2019</div>
<div style="position:absolute;left:455.80px;top:430.54px;font-size:12px;line-height:12px;font-weight:400;color:#000;white-space:pre;-webkit-text-stroke:0.2px currentColor;transform-origin:0 0;transform:scaleX(0.9050);">0,28 €</div>
<div style="position:absolute;left:545.80px;top:430.54px;font-size:12px;line-height:12px;font-weight:400;color:#000;white-space:pre;-webkit-text-stroke:0.2px currentColor;transform-origin:0 0;transform:scaleX(0.9050);">0,36 €</div>
<div style="position:absolute;left:624.36px;top:430.54px;font-size:12px;line-height:12px;font-weight:400;color:#000;white-space:pre;-webkit-text-stroke:0.2px currentColor;transform-origin:0 0;transform:scaleX(0.9050);">1,00</div>
<div style="position:absolute;left:695.80px;top:430.54px;font-size:12px;line-height:12px;font-weight:400;color:#000;white-space:pre;-webkit-text-stroke:0.2px currentColor;transform-origin:0 0;transform:scaleX(0.9050);">0,28 €</div>
<div style="position:absolute;left:775.80px;top:430.54px;font-size:12px;line-height:12px;font-weight:400;color:#000;white-space:pre;-webkit-text-stroke:0.2px currentColor;transform-origin:0 0;transform:scaleX(0.9050);">0,36 €</div>
<div style="position:absolute;left:855.80px;top:430.54px;font-size:12px;line-height:12px;font-weight:400;color:#000;white-space:pre;-webkit-text-stroke:0.2px currentColor;transform-origin:0 0;transform:scaleX(0.9050);">0,08 €</div>
<div style="position:absolute;left:55.20px;top:450.54px;font-size:12px;line-height:12px;font-weight:400;color:#000;white-space:pre;-webkit-text-stroke:0.2px currentColor;transform-origin:0 0;transform:scaleX(0.9480);">Travel cost</div>
<div style="position:absolute;left:219.70px;top:450.54px;font-size:12px;line-height:12px;font-weight:400;color:#000;white-space:pre;-webkit-text-stroke:0.2px currentColor;transform-origin:0 0;transform:scaleX(0.9050);">31.07.2019</div>
<div style="position:absolute;left:455.80px;top:450.54px;font-size:12px;line-height:12px;font-weight:400;color:#000;white-space:pre;-webkit-text-stroke:0.2px currentColor;transform-origin:0 0;transform:scaleX(0.9050);">0,00 €</div>
<div style="position:absolute;left:545.80px;top:450.54px;font-size:12px;line-height:12px;font-weight:400;color:#000;white-space:pre;-webkit-text-stroke:0.2px currentColor;transform-origin:0 0;transform:scaleX(0.9050);">0,00 €</div>
<div style="position:absolute;left:624.36px;top:450.54px;font-size:12px;line-height:12px;font-weight:400;color:#000;white-space:pre;-webkit-text-stroke:0.2px currentColor;transform-origin:0 0;transform:scaleX(0.9050);">1,00</div>
<div style="position:absolute;left:695.80px;top:450.54px;font-size:12px;line-height:12px;font-weight:400;color:#000;white-space:pre;-webkit-text-stroke:0.2px currentColor;transform-origin:0 0;transform:scaleX(0.9050);">0,00 €</div>
<div style="position:absolute;left:775.80px;top:450.54px;font-size:12px;line-height:12px;font-weight:400;color:#000;white-space:pre;-webkit-text-stroke:0.2px currentColor;transform-origin:0 0;transform:scaleX(0.9050);">0,00 €</div>
<div style="position:absolute;left:855.80px;top:450.54px;font-size:12px;line-height:12px;font-weight:400;color:#000;white-space:pre;-webkit-text-stroke:0.2px currentColor;transform-origin:0 0;transform:scaleX(0.9050);">0,00 €</div>
<div style="position:absolute;left:585.00px;top:431.39px;font-size:11px;line-height:11px;font-weight:400;color:#8a8a8a;white-space:pre;-webkit-text-stroke:0.2px currentColor;transform-origin:0 0;transform:scaleX(0.9500);">km</div>
<div style="position:absolute;left:23.20px;top:477.39px;font-size:11px;line-height:11px;font-weight:400;color:#111;white-space:pre;-webkit-text-stroke:0.2px currentColor;transform-origin:0 0;transform:scaleX(0.9576);">Price</div>
<div style="position:absolute;left:43.60px;top:496.29px;font-size:11px;line-height:11px;font-weight:400;color:#111;white-space:pre;-webkit-text-stroke:0.2px currentColor;transform-origin:0 0;transform:scaleX(1.0247);">Theta Ltd. » Quote</div>
<div style="position:absolute;left:43.60px;top:515.69px;font-size:11px;line-height:11px;font-weight:400;color:#111;white-space:pre;-webkit-text-stroke:0.2px currentColor;transform-origin:0 0;transform:scaleX(1.0103);">Alpha Ltd. »...» Support Phone</div>
<div style="position:absolute;left:43.60px;top:535.09px;font-size:11px;line-height:11px;font-weight:400;color:#111;white-space:pre;-webkit-text-stroke:0.2px currentColor;transform-origin:0 0;transform:scaleX(0.9177);">More</div>
<div style="position:absolute;left:317.20px;top:536.19px;font-size:11px;line-height:11px;font-weight:400;color:#111;white-space:pre;-webkit-text-stroke:0.2px currentColor;transform-origin:0 0;transform:scaleX(1.0138);">Theta Ltd. » Quote</div>
<div style="position:absolute;left:315.60px;top:548.93px;font-size:10px;line-height:10px;font-weight:400;color:#111;white-space:pre;-webkit-text-stroke:0.2px currentColor;transform-origin:0 0;transform:scaleX(0.9306);">77% - 2.173.332,00 €</div>
<div style="position:absolute;left:699.50px;top:599.19px;font-size:11px;line-height:11px;font-weight:400;color:#111;white-space:pre;-webkit-text-stroke:0.2px currentColor;transform-origin:0 0;transform:scaleX(0.9975);">More</div>
<div style="position:absolute;left:678.50px;top:612.03px;font-size:10px;line-height:10px;font-weight:400;color:#111;white-space:pre;-webkit-text-stroke:0.2px currentColor;transform-origin:0 0;transform:scaleX(0.9489);">0% - 2.291,36 €</div>
<div style="position:absolute;left:643.00px;top:652.89px;font-size:11px;line-height:11px;font-weight:400;color:#111;white-space:pre;-webkit-text-stroke:0.2px currentColor;transform-origin:0 0;transform:scaleX(1.0036);">Alpha Ltd. »...» Support Phone</div>
<div style="position:absolute;left:677.50px;top:666.13px;font-size:10px;line-height:10px;font-weight:400;color:#111;white-space:pre;-webkit-text-stroke:0.2px currentColor;transform-origin:0 0;transform:scaleX(0.9393);">23% - 655.350,00 €</div>
<div style="position:absolute;left:11px;top:149px;width:253px;height:54px;border:3px solid #f23b3d;box-shadow:2px 3px 5px rgba(0,0,0,0.30), inset 1px 2px 4px rgba(0,0,0,0.25)"></div>
<svg style="left:625px;top:30px" width="18" height="26" viewBox="0 0 18 26"><path d="M0.8 0.8 V21 L5.2 16.6 L9.2 24.6 L12 23.2 L8.8 16 L15.6 16 Z" fill="#fff" stroke="#111" stroke-width="1.1" stroke-linejoin="miter"/></svg>
<div style="position:absolute;left:9px;top:455px;width:1045px;height:9px;background:#fff"></div>
<div style="position:absolute;left:9px;top:264px;width:1044px;height:192px;border:1px solid #a3a3a3"></div>
<div style="position:absolute;left:478px;top:461px;width:92px;height:1px;background-image:linear-gradient(90deg,#9c9c9c 1px,transparent 1px);background-size:3px 1px"></div>
</body></html>
